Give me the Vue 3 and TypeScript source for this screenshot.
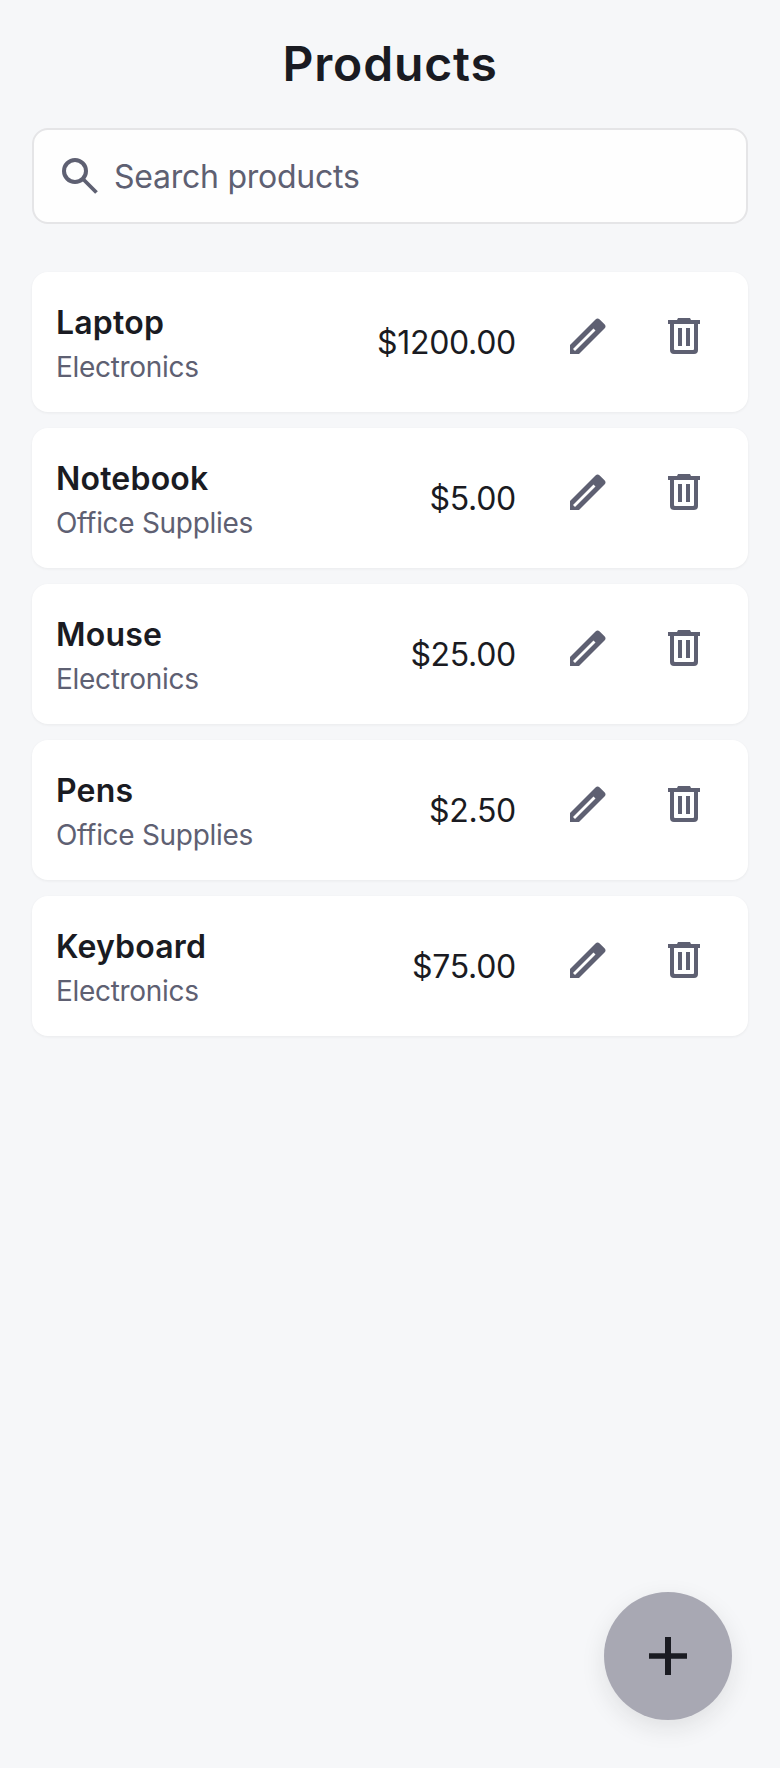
<template>
  <div class="page">
    <h1 class="page__title">Products</h1>

    <label class="search">
      <svg class="search__icon" viewBox="0 0 36 36" fill="none" stroke="currentColor">
        <circle cx="13" cy="13" r="11" stroke-width="4" />
        <path d="M20.500 20.500L34.500 34.500" stroke-width="3.800" />
      </svg>
      <span class="search__placeholder">Search products</span>
    </label>

    <ul class="list">
      <li v-for="item in products" :key="item.name" class="card">
        <div class="card__text">
          <div class="card__name">{{ item.name }}</div>
          <div class="card__category">{{ item.category }}</div>
        </div>
        <div class="card__price">{{ formatPrice(item.price) }}</div>
        <div class="card__actions">
          <button class="icon-btn" aria-label="Edit">
            <svg viewBox="0 0 36 36" width="36" height="36">
              <path
                fill-rule="evenodd"
                d="M0 27L25.500 1.500a3 3 0 0 1 4.200 0l4.800 4.800a3 3 0 0 1 0 4.200L9 36H0zM3 31L5 33 25.500 12.500 23.500 10.500z"
              />
            </svg>
          </button>
          <button class="icon-btn" aria-label="Delete">
            <svg viewBox="0 0 32 36" width="32" height="36">
              <path
                fill-rule="evenodd"
                d="M10 0h12l1 2h9v4h-2v26a4 4 0 0 1-4 4H6a4 4 0 0 1-4-4V6H0V2h9zM6 6v25a1 1 0 0 0 1 1h18a1 1 0 0 0 1-1V6zM10 10v18h4V10zM18 10v18h4V10z"
              />
            </svg>
          </button>
        </div>
      </li>
    </ul>

    <button class="fab" aria-label="Add product">
      <svg viewBox="0 0 38 38" width="38" height="38">
        <path d="M16 0h6v16.300h16v5.400H22V38h-6V21.700H0v-5.400h16z" />
      </svg>
    </button>
  </div>
</template>

<script setup lang="ts">
interface Product {
  name: string;
  category: string;
  price: number;
}

const products: Product[] = [
  { name: "Laptop", category: "Electronics", price: 1200 },
  { name: "Notebook", category: "Office Supplies", price: 5 },
  { name: "Mouse", category: "Electronics", price: 25 },
  { name: "Pens", category: "Office Supplies", price: 2.5 },
  { name: "Keyboard", category: "Electronics", price: 75 },
];

const formatPrice = (value: number) => `$${value.toFixed(2)}`;
</script>

<style>
html,
body {
  margin: 0;
  background: #f6f7f9;
}
</style>

<style scoped>
.page {
  position: relative;
  box-sizing: border-box;
  height: 1768px;
  padding: 32px 32px 0;
  background: #f6f7f9;
  font-family: Inter, "Noto Sans", sans-serif;
  color: #1a1b22;
}

.page__title {
  margin: 0 0 32px;
  height: 64px;
  font-size: 48px;
  line-height: 64px;
  font-weight: 600;
  letter-spacing: 0.85px;
  text-align: center;
}

.search {
  display: flex;
  align-items: center;
  gap: 16px;
  box-sizing: border-box;
  height: 96px;
  padding: 0 24px 0 28px;
  background: #fefefe;
  border: 2px solid #e5e5e7;
  border-radius: 16px;
  color: #5e6072;
}

.search__icon {
  width: 36px;
  height: 36px;
  flex-shrink: 0;
}

.search__placeholder {
  padding-top: 2px;
  font-size: 32px;
  line-height: 40px;
  letter-spacing: -0.25px;
}

.list {
  list-style: none;
  margin: 48px 0 0;
  padding: 0;
  display: flex;
  flex-direction: column;
  gap: 16px;
}

.card {
  display: flex;
  align-items: center;
  box-sizing: border-box;
  height: 140px;
  padding: 16px 16px 16px 24px;
  background: #fff;
  border-radius: 16px;
  box-shadow: 0 1px 3px rgba(26, 27, 34, 0.06);
}

.card__text {
  flex: 1;
  min-width: 0;
  padding-top: 6px;
}

.card__name {
  font-size: 32px;
  line-height: 44px;
  font-weight: 600;
  letter-spacing: 0.2px;
}

.card__category {
  font-size: 28px;
  line-height: 44px;
  letter-spacing: -0.3px;
  color: #5e6072;
}

.card__price {
  margin-right: 24px;
  padding-top: 2px;
  font-size: 32px;
  line-height: 44px;
  letter-spacing: -0.3px;
}

.card__actions {
  display: flex;
  align-self: flex-start;
}

.icon-btn {
  display: flex;
  align-items: center;
  justify-content: center;
  width: 96px;
  height: 96px;
  padding: 0;
  border: none;
  background: none;
  cursor: pointer;
}

.icon-btn svg {
  fill: #5e6072;
}

.fab {
  position: absolute;
  right: 48px;
  bottom: 48px;
  display: flex;
  align-items: center;
  justify-content: center;
  width: 128px;
  height: 128px;
  padding: 0;
  border: none;
  border-radius: 50%;
  background: #a8a8b3;
  box-shadow: 0 8px 24px rgba(26, 27, 34, 0.1);
  cursor: pointer;
}

.fab svg {
  fill: #1a1b22;
}
</style>
